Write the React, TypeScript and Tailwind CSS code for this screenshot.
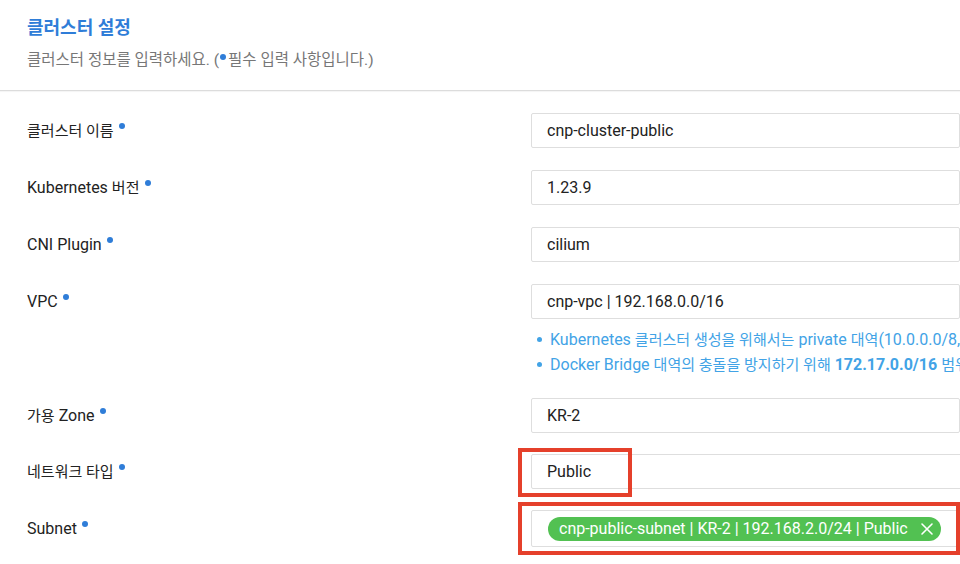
import React from 'react';

const font = { fontFamily: 'Roboto, "Noto Sans CJK KR", sans-serif' };

// Hangul runs are set a touch smaller than the Latin text around them
function T({ children }: { children: string }) {
  const parts = children.split(/([\uAC00-\uD7A3]+(?:\s[\uAC00-\uD7A3]+)*)/);
  return (
    <>
      {parts.map((p, i) =>
        /[\uAC00-\uD7A3]/.test(p) ? (
          <span key={i} className="text-[0.94em]">
            {p}
          </span>
        ) : (
          <React.Fragment key={i}>{p}</React.Fragment>
        )
      )}
    </>
  );
}

function Dot() {
  return <span className="ml-[5px] mt-[2px] inline-block h-[6px] w-[6px] shrink-0 rounded-full bg-[#2f7dd8]" />;
}

function Label({ text }: { text: string }) {
  return (
    <div className="flex h-[20px] w-[504px] shrink-0 items-start text-[16px] leading-[20px] text-[#222]">
      <span className="h-[20px]">
        <T>{text}</T>
      </span>
      <Dot />
    </div>
  );
}

function Input({ value }: { value: string }) {
  return (
    <div className="flex h-[35px] w-[480px] items-center rounded-[2px] border border-[#dedede] bg-white pl-[15px] text-[16px] text-[#222]">
      {value}
    </div>
  );
}

function Row({ label, value }: { label: string; value: string }) {
  return (
    <div className="flex items-center">
      <Label text={label} />
      <Input value={value} />
    </div>
  );
}

export default function App() {
  return (
    <div className="h-[564px] w-[960px] overflow-hidden bg-white" style={font}>
      {/* Header */}
      <div className="border-b border-[#dcdcdc] px-[27px] pb-[20px] pt-[18px] shadow-[0_1px_1px_rgba(0,0,0,0.04)]">
        <div className="h-[20px] text-[18px] font-bold leading-[20px] text-[#2f7dd8]">클러스터 설정</div>
        <div className="mt-[12px] flex h-[20px] items-center whitespace-nowrap text-[15.5px] leading-[20px] text-[#777]">
          <span>클러스터 정보를 입력하세요. (</span>
          <span className="mb-[6px] ml-[1px] mr-[2px] inline-block h-[6px] w-[6px] shrink-0 rounded-full bg-[#2f7dd8]" />
          <span>필수 입력 사항입니다.)</span>
        </div>
      </div>

      {/* Form */}
      <div className="flex flex-col gap-[22px] pl-[27px] pt-[22px]">
        <Row label="클러스터 이름" value="cnp-cluster-public" />
        <Row label="Kubernetes 버전" value="1.23.9" />
        <Row label="CNI Plugin" value="cilium" />

        <div>
          <Row label="VPC" value="cnp-vpc | 192.168.0.0/16" />
          <ul className="ml-[504px] mt-[8px] whitespace-nowrap text-[16px] leading-[25px] text-[#42a3e6]">
            <li className="flex h-[25px] items-center overflow-hidden">
              <span className="ml-[6px] mr-[8px] inline-block h-[5px] w-[5px] shrink-0 rounded-full bg-[#42a3e6]" />
              <span>
                <T>Kubernetes 클러스터 생성을 위해서는 private 대역(10.0.0.0/8, 172.16.0.0/12, 192.168.0.0/16)을 사용해야 합니다.</T>
              </span>
            </li>
            <li className="flex h-[25px] items-center overflow-hidden">
              <span className="ml-[6px] mr-[8px] inline-block h-[5px] w-[5px] shrink-0 rounded-full bg-[#42a3e6]" />
              <span>
                <T>Docker Bridge 대역의 충돌을 방지하기 위해 </T>
                <b className="font-bold">172.17.0.0/16</b>
                <T> 범위는 사용할 수 없습니다.</T>
              </span>
            </li>
          </ul>
        </div>

        <div className="-mt-[1px]">
          <Row label="가용 Zone" value="KR-2" />
        </div>

        <div className="-mt-[1px] flex items-center">
          <Label text="네트워크 타입" />
          <div className="relative">
            <Input value="Public" />
            <div className="absolute left-[-13px] top-[-6px] h-[49px] w-[114px] border-[4px] border-[#e5402b]" />
          </div>
        </div>

        <div className="-mt-[1px] flex items-center">
          <Label text="Subnet" />
          <div className="relative">
            <div className="flex h-[37px] w-[480px] items-center rounded-[2px] border border-[#dedede] bg-white pl-[16px]">
              <span className="flex h-[24px] items-center whitespace-nowrap rounded-full bg-[#52c152] pl-[11px] pr-[7px] text-[16px] text-white">
                cnp-public-subnet | KR-2 | 192.168.2.0/24 | Public
                <svg className="ml-[12px]" width="14" height="14" viewBox="0 0 14 14" fill="none" stroke="white" strokeWidth="1.6" strokeLinecap="round">
                  <path d="M2 2 L12 12 M12 2 L2 12" />
                </svg>
              </span>
            </div>
            <div className="absolute left-[-13px] top-[-8px] h-[53px] w-[442px] border-[4px] border-[#e5402b]" />
          </div>
        </div>
      </div>
    </div>
  );
}
